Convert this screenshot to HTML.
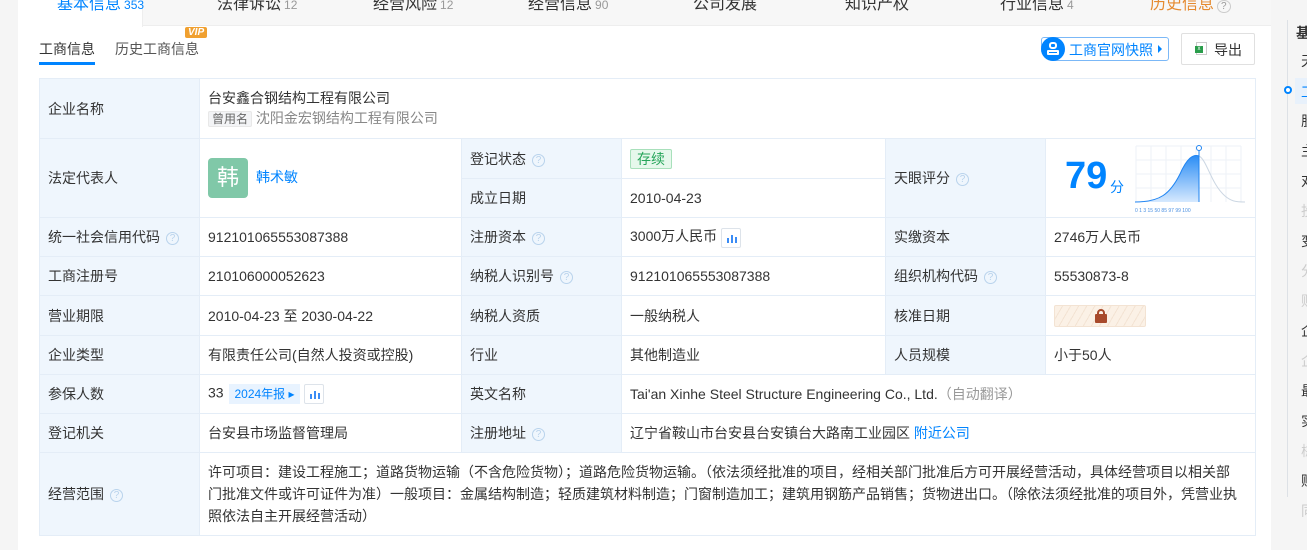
<!DOCTYPE html>
<html><head><meta charset="utf-8"><style>
*{margin:0;padding:0;box-sizing:border-box}
body{width:1307px;height:550px;overflow:hidden;background:#f5f5f5;font-family:"Liberation Sans","Noto Sans CJK SC",sans-serif;font-size:14px;color:#333;position:relative}
.card{position:absolute;left:18px;top:0;width:1253px;height:550px;background:#fff}
.tabs{position:absolute;left:18px;top:0;width:1253px;height:26px;background:#f7f7f7;border-bottom:1px solid #eee}
.tab{position:absolute;top:-10px;font-size:16px;color:#333;white-space:nowrap}
.tab sup{font-size:12px;color:#999;vertical-align:baseline;margin-left:3px}
.act{position:absolute;left:18px;top:0;width:125px;height:27px;background:#fff;border-right:1px solid #eee}
table{position:absolute;left:39px;top:78px;border-collapse:collapse;table-layout:fixed;width:1216px}
td{border:1px solid #e4edf7;padding:0 8px;vertical-align:middle}
td.l{background:#eff6fd}
.q{display:inline-block;width:13px;height:13px;border:1px solid #b9d3ec;border-radius:50%;color:#b9d3ec;font-size:10px;line-height:11px;text-align:center;margin-left:6px;vertical-align:1px}
.ico{display:inline-block;width:20px;height:20px;border:1px solid #dde3ea;border-radius:2px;vertical-align:middle;margin-left:4px;position:relative}
.ico i{position:absolute;bottom:4px;width:2px;background:#3b8cf5}
.side{position:absolute;left:1287px;top:20px;width:1px;height:477px;background:#dde1e6}
.si{position:absolute;left:1301px;font-size:14px;color:#333}
.g{color:#ccc}
</style></head><body>
<div class="card"></div>
<div class="tabs"></div>
<div class="act"></div>
<div class="tab" style="left:57px;color:#0084ff">基本信息<sup style="color:#0084ff">353</sup></div>
<div class="tab" style="left:217px">法律诉讼<sup>12</sup></div>
<div class="tab" style="left:373px">经营风险<sup>12</sup></div>
<div class="tab" style="left:528px">经营信息<sup>90</sup></div>
<div class="tab" style="left:693px">公司发展</div>
<div class="tab" style="left:845px">知识产权</div>
<div class="tab" style="left:1000px">行业信息<sup>4</sup></div>
<div class="tab" style="left:1150px;color:#e58a2f">历史信息<sup style="border:1px solid #ccc;border-radius:50%;padding:0 3px;font-size:10px">?</sup></div>

<div style="position:absolute;left:39px;top:39px;font-size:14px;color:#333">工商信息</div>
<div style="position:absolute;left:39px;top:62px;width:56px;height:3px;background:#0084ff"></div>
<div style="position:absolute;left:115px;top:39px;font-size:14px;color:#555">历史工商信息</div>
<div style="position:absolute;left:185px;top:27px;background:#f0a030;color:#fff;font-size:10px;font-weight:bold;font-style:italic;padding:0 3px;line-height:11px;border-radius:2px">VIP</div>

<div style="position:absolute;left:1041px;top:37px;width:128px;height:24px;border:1px solid #7bb8f7;border-radius:3px 3px 3px 12px"></div>
<div style="position:absolute;left:1041px;top:37px;width:24px;height:24px;background:#0084ff;border-radius:50%"><div style="position:absolute;left:8px;top:5px;width:8px;height:7px;border:2px solid #fff;border-radius:3px"></div><div style="position:absolute;left:6px;top:13px;width:12px;height:5px;border:2px solid #fff;border-radius:1px"></div></div>
<div style="position:absolute;left:1069px;top:40px;color:#0084ff;font-size:14px">工商官网快照</div>
<div style="position:absolute;left:1158px;top:45px;border-left:4px solid #0084ff;border-top:4px solid transparent;border-bottom:4px solid transparent"></div>
<div style="position:absolute;left:1181px;top:33px;width:74px;height:32px;border:1px solid #e0e0e0;border-radius:2px"></div>
<div style="position:absolute;left:1196px;top:42px;width:11px;height:13px;border:1px solid #ccc;background:#fff"><div style="position:absolute;left:-2px;top:3px;width:8px;height:7px;background:#2a9d4b;color:#fff;font-size:6px;line-height:7px;text-align:center">x</div></div>
<div style="position:absolute;left:1214px;top:40px;font-size:14px">导出</div>

<table>
<colgroup><col style="width:160px"><col style="width:262px"><col style="width:160px"><col style="width:264px"><col style="width:160px"><col style="width:210px"></colgroup>
<tr style="height:60px"><td class="l">企业名称</td><td colspan="5" style="line-height:20px">台安鑫合钢结构工程有限公司<br><span style="background:#f3f4f6;border:1px solid #e8e8e8;color:#666;font-size:12px;padding:0 3px;border-radius:2px">曾用名</span> <span style="color:#888">沈阳金宏钢结构工程有限公司</span></td></tr>
<tr style="height:40px"><td class="l" rowspan="2">法定代表人</td><td rowspan="2"><span style="display:inline-block;width:40px;height:40px;background:#80c8a8;color:#fff;border-radius:4px;font-size:22px;text-align:center;line-height:40px;vertical-align:middle">韩</span><span style="color:#0084ff;margin-left:8px">韩术敏</span></td><td class="l">登记状态<span class="q">?</span></td><td><span style="background:#e6f8ec;border:1px solid #a8e0bb;color:#26a55a;padding:1px 6px;border-radius:2px">存续</span></td><td class="l" rowspan="2">天眼评分<span class="q">?</span></td><td rowspan="2" style="position:relative">
<span style="position:absolute;left:19px;top:16px;font-size:38px;font-weight:bold;color:#0084ff;font-family:'Liberation Sans',sans-serif">79</span><span style="position:absolute;left:64px;top:38px;color:#0084ff;font-size:14px">分</span>
<svg style="position:absolute;left:89px;top:5px" width="110" height="70" viewBox="0 0 110 70"><g stroke="#eef2f7" stroke-width="1"><path d="M1 2V58M16 2V58M31 2V58M46 2V58M61 2V58M76 2V58M91 2V58M106 2V58M1 2H106M1 16H106M1 30H106M1 44H106"/></g><defs><linearGradient id="gr" x1="0" y1="0" x2="0" y2="1"><stop offset="0" stop-color="#2b8df5"/><stop offset="1" stop-color="#d6e9fe"/></linearGradient></defs><path d="M0 58C25 58 35 50 45 30C52 14 58 10 64 12V58Z" fill="url(#gr)"/><path d="M64 12C72 16 76 40 90 52C96 57 100 58 110 58" fill="none" stroke="#ccd7e3"/><path d="M0 58C25 58 35 50 45 30C52 14 58 10 64 12" fill="none" stroke="#1f84f2"/><path d="M64 4V58" stroke="#1f84f2"/><circle cx="64" cy="4" r="2.5" fill="#fff" stroke="#1f84f2"/><text x="0" y="68" font-size="5" fill="#4a90e2">0   1   3  15  50  85  97  99 100</text></svg></td></tr>
<tr style="height:39px"><td class="l">成立日期</td><td>2010-04-23</td></tr>
<tr style="height:39px"><td class="l">统一社会信用代码<span class="q">?</span></td><td>912101065553087388</td><td class="l">注册资本<span class="q">?</span></td><td>3000万人民币<span class="ico"><i style="left:5px;height:5px"></i><i style="left:9px;height:8px"></i><i style="left:13px;height:6px"></i></span></td><td class="l">实缴资本</td><td>2746万人民币</td></tr>
<tr style="height:39px"><td class="l">工商注册号</td><td>210106000052623</td><td class="l">纳税人识别号<span class="q">?</span></td><td>912101065553087388</td><td class="l">组织机构代码<span class="q">?</span></td><td>55530873-8</td></tr>
<tr style="height:40px"><td class="l">营业期限</td><td>2010-04-23 至 2030-04-22</td><td class="l">纳税人资质</td><td>一般纳税人</td><td class="l">核准日期</td><td><span style="display:inline-block;width:92px;height:22px;background:repeating-linear-gradient(120deg,#fbf1e6 0 6px,#f3e3d3 6px 7px);border:1px solid #f3e3d3;border-radius:2px;position:relative;vertical-align:middle"><span style="position:absolute;left:40px;top:8px;width:12px;height:9px;background:#a84a2c;border-radius:1px"></span><span style="position:absolute;left:42px;top:3px;width:8px;height:8px;border:2px solid #a84a2c;border-radius:4px 4px 0 0"></span></span></td></tr>
<tr style="height:39px"><td class="l">企业类型</td><td>有限责任公司(自然人投资或控股)</td><td class="l">行业</td><td>其他制造业</td><td class="l">人员规模</td><td>小于50人</td></tr>
<tr style="height:39px"><td class="l">参保人数</td><td>33 <span style="background:#e8f3ff;color:#0084ff;font-size:12px;padding:3px 5px;margin-left:2px">2024年报 ▸</span><span class="ico"><i style="left:5px;height:5px"></i><i style="left:9px;height:8px"></i><i style="left:13px;height:6px"></i></span></td><td class="l">英文名称</td><td colspan="3">Tai'an Xinhe Steel Structure Engineering Co., Ltd.<span style="color:#999">（自动翻译）</span></td></tr>
<tr style="height:39px"><td class="l">登记机关</td><td>台安县市场监督管理局</td><td class="l">注册地址<span class="q">?</span></td><td colspan="3">辽宁省鞍山市台安县台安镇台大路南工业园区 <span style="color:#0084ff">附近公司</span></td></tr>
<tr style="height:83px"><td class="l">经营范围<span class="q">?</span></td><td colspan="5" style="line-height:22px;padding-right:18px">许可项目：建设工程施工；道路货物运输（不含危险货物）；道路危险货物运输。（依法须经批准的项目，经相关部门批准后方可开展经营活动，具体经营项目以相关部门批准文件或许可证件为准）一般项目：金属结构制造；轻质建筑材料制造；门窗制造加工；建筑用钢筋产品销售；货物进出口。（除依法须经批准的项目外，凭营业执照依法自主开展经营活动）</td></tr>
</table>

<div class="side"></div>
<div style="position:absolute;left:1284px;top:86px;width:8px;height:8px;border:2px solid #0084ff;border-radius:50%;background:#fff"></div>
<div style="position:absolute;left:1295px;top:78px;width:12px;height:26px;background:#e8f1fb"></div>
<div class="si" style="top:23px;left:1296px;font-weight:bold">基</div>
<div class="si" style="top:51px">天</div>
<div class="si" style="top:82px;color:#0084ff">工</div>
<div class="si" style="top:111px">股</div>
<div class="si" style="top:141px">主</div>
<div class="si" style="top:171px">对</div>
<div class="si g" style="top:201px">投</div>
<div class="si" style="top:231px">变</div>
<div class="si g" style="top:261px">分</div>
<div class="si g" style="top:291px">财</div>
<div class="si" style="top:321px">企</div>
<div class="si g" style="top:351px">企</div>
<div class="si" style="top:381px">最</div>
<div class="si" style="top:411px">实</div>
<div class="si g" style="top:441px">械</div>
<div class="si" style="top:471px">赊</div>
<div class="si g" style="top:501px">同</div>
</body></html>
